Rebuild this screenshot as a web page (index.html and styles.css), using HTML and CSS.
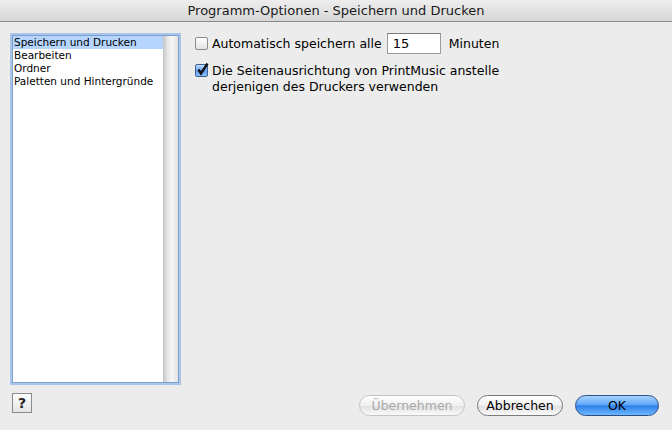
FILE: index.html
```html
<!DOCTYPE html>
<html>

<head>
  <meta charset="utf-8">
  <title>Programm-Optionen</title>
  <link rel="stylesheet" href="styles.css">
</head>

<body>
  <div class="window">
    <div class="titlebar">Programm-Optionen - Speichern und Drucken</div>
    <div class="content">
      <div class="side">
        <div class="list">
          <ul class="items">
            <li class="selected">Speichern und Drucken</li>
            <li>Bearbeiten</li>
            <li>Ordner</li>
            <li>Paletten und Hintergründe</li>
          </ul>
          <div class="scrollbar"></div>
        </div>
        <span class="help">?</span>
      </div>
      <div class="main">
        <div class="row">
          <span class="check"></span>
          <span class="label">Automatisch speichern alle</span>
          <span class="field">15</span>
          <span class="unit">Minuten</span>
        </div>
        <div class="row two">
          <span class="check on">
            <svg width="13" height="13" viewBox="0 0 13 13">
              <path d="M2.5 6.5 L5 10.5 L11.5 0.5" fill="none" stroke="#111" stroke-width="2.4" stroke-linejoin="miter" />
            </svg>
          </span>
          <span class="label">Die Seitenausrichtung von PrintMusic anstelle<br>derjenigen des Druckers verwenden</span>
        </div>
        <div class="buttons">
          <span class="btn disabled">Übernehmen</span>
          <span class="btn cancel">Abbrechen</span>
          <span class="btn ok">OK</span>
        </div>
      </div>
    </div>
  </div>
</body>

</html>
```

FILE: styles.css
```css
* {
  margin: 0;
  padding: 0;
  box-sizing: border-box;
}

body {
  font-family: "DejaVu Sans", "Liberation Sans", sans-serif;
  color: #000;
}

.window {
  width: 672px;
  height: 430px;
  background: #ececec;
  display: flex;
  flex-direction: column;
}

/* 标题栏 */
.titlebar {
  height: 22px;
  border-bottom: 1px solid #8a8a8a;
  background: linear-gradient(#eeeeee, #d6d6d6);
  text-align: center;
  font-size: 13px;
  line-height: 21px;
  color: #1a1a1a;
}

.content {
  flex: 1;
  display: flex;
  padding: 11px 13px 14px 10px;
}

/* 左侧列表 */
.side {
  width: 171px;
  display: flex;
  flex-direction: column;
}

.list {
  height: 352px;
  display: flex;
  border: 2px solid #a9c6ea;
  box-shadow: inset 0 0 0 1px #7f9fcc;
  padding: 1px;
  background: #fff;
}

.items {
  flex: 1;
  list-style: none;
  font-size: 10.5px;
  line-height: 13px;
}

.items li {
  padding-left: 1px;
}

.items .selected {
  background: #b5d5ff;
}

.scrollbar {
  width: 15px;
  background: linear-gradient(90deg, #c4c4c4, #e6e6e6 30%, #f6f6f6 60%, #e2e2e2);
}

.help {
  margin: 8px 0 0 2px;
  width: 20px;
  height: 20px;
  border: 1px solid #8a8a8a;
  background: linear-gradient(#fdfdfd, #e4e4e4);
  font-size: 14px;
  font-weight: bold;
  line-height: 18px;
  text-align: center;
  color: #222;
}

/* 右侧选项 */
.main {
  flex: 1;
  display: flex;
  flex-direction: column;
  padding-left: 14px;
  font-size: 12.5px;
}

.row {
  display: flex;
  align-items: center;
  height: 21px;
}

.row.two {
  margin-top: 9px;
  align-items: flex-start;
  height: auto;
  line-height: 16px;
}

.check {
  width: 13px;
  height: 13px;
  border: 1px solid #8c8c8c;
  border-radius: 2px;
  background: linear-gradient(#ffffff, #e2e2e2);
  margin-right: 4px;
  flex: none;
}

.check.on {
  margin-top: 1px;
  border-color: #3f5f93;
  background: linear-gradient(#c6e0ff, #5c9ef2 55%, #8dc0ff);
}

.check svg {
  display: block;
  margin: -2px 0 0 0;
}

.field {
  width: 54px;
  height: 21px;
  margin-left: 5px;
  border: 1px solid #9b9b9b;
  border-top-color: #7a7a7a;
  background: #fff;
  padding-left: 5px;
  font-size: 13px;
  line-height: 19px;
}

.unit {
  margin-left: 8px;
}

/* 底部按钮 */
.buttons {
  margin-top: auto;
  display: flex;
  justify-content: flex-end;
  gap: 12px;
}

.btn {
  height: 21px;
  border-radius: 11px;
  border: 1px solid #7a7a7a;
  background: linear-gradient(#ffffff, #f0f0f0 50%, #e0e0e0 51%, #fafafa);
  font-size: 12.5px;
  line-height: 19px;
  text-align: center;
}

.btn.disabled {
  width: 106px;
  color: #a8a8a8;
  border-color: #c4c4c4;
}

.btn.cancel {
  width: 86px;
}

.btn.ok {
  width: 84px;
  border-color: #2d4f86;
  background: linear-gradient(#a9d2ff, #5fa8f8 45%, #2f80ea 52%, #6cb8ff);
}
```
